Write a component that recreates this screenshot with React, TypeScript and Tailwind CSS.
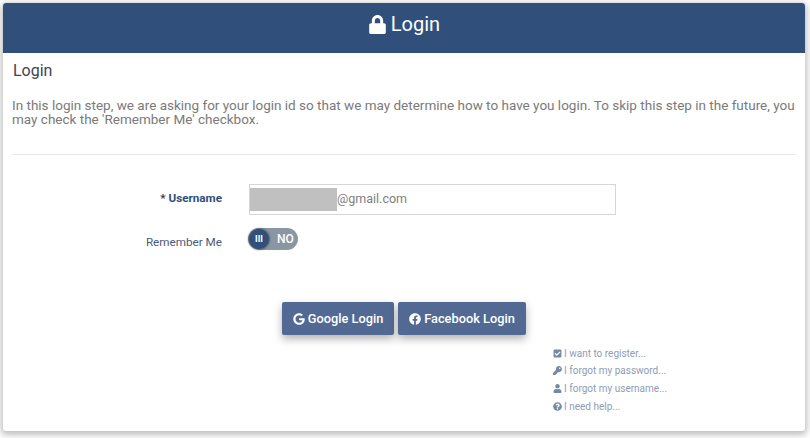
import React from "react";
import { FaLock, FaGoogle, FaFacebook, FaCheckSquare, FaKey, FaUser, FaQuestionCircle } from "react-icons/fa";

const links = [
  { icon: <FaCheckSquare />, text: "I want to register..." },
  { icon: <FaKey />, text: "I forgot my password..." },
  { icon: <FaUser />, text: "I forgot my username..." },
  { icon: <FaQuestionCircle />, text: "I need help..." },
];

const App = () => {
  return (
    <div className="w-[810px] h-[438px] bg-white pt-[3px] pl-[3px] font-['Roboto',sans-serif] overflow-hidden">
      <div className="w-[802px] h-[428px] bg-white rounded-[3px] shadow-[0_2px_6px_2px_rgba(0,0,0,0.25)]">
        <div className="h-[50px] bg-[#314f7b] rounded-t-[3px] flex items-center justify-center gap-[4px] text-white text-[20px] pb-[8px]">
          <FaLock className="text-[19px]" />
          <span>Login</span>
        </div>

        <div className="px-[10px]">
          <h2 className="text-[16px] leading-[20px] text-[#3d4452] mt-[8px]">Login</h2>
          <p className="text-[13.5px] leading-[14px] text-[#7a7a7a] mt-[17px] -ml-px -mr-[6px]">
            In this login step, we are asking for your login id so that we may determine how to have you login. To skip this step in the future, you may check the 'Remember Me' checkbox.
          </p>
          <div className="h-px bg-[#e6e6e6] mt-[28px]" />

          <div className="flex items-center mt-[29px]">
            <label className="w-[209px] text-right text-[11.7px] font-bold text-[#314f7b] pb-[2px]">
              <span className="text-[#333b48]">* </span>Username
            </label>
            <div className="ml-[27px] w-[367px] h-[31px] border border-[#d6d6d6] flex items-center pl-0 text-[12.5px] text-[#808080]">
              <span className="w-[87px] h-[23px] bg-[#c0c0c0]" />
              <span>@gmail.com</span>
            </div>
          </div>

          <div className="flex items-center mt-[13px]">
            <label className="w-[209px] text-right text-[11.7px] leading-[14px] text-[#4a5a75] pt-[6px]">Remember Me</label>
            <div className="ml-[26px] w-[50px] h-[22px] rounded-full bg-[#8a97a3] flex items-center relative">
              <span className="w-[20px] h-[20px] ml-px pt-[2px] rounded-full bg-[#314f7b] shadow-[0_0_2px_1px_rgba(0,0,0,0.35)] text-white text-[9px] font-bold flex items-center justify-center">
                III
              </span>
              <span className="ml-[8px] text-white text-[12px] font-medium">NO</span>
            </div>
          </div>

          <div className="flex ml-[269px] mt-[52px] gap-[4px]">
            <button className="w-[112px] h-[33px] bg-[#526a93] rounded-[2px] text-white text-[12.8px] font-medium flex items-center justify-center gap-[3px] shadow-[0_4px_8px_rgba(0,0,0,0.3)]">
              <FaGoogle className="text-[12px]" />
              Google Login
            </button>
            <button className="w-[128px] h-[33px] bg-[#526a93] rounded-[2px] text-white text-[12.8px] font-medium flex items-center justify-center gap-[3px] shadow-[0_4px_8px_rgba(0,0,0,0.3)]">
              <FaFacebook className="text-[12px]" />
              Facebook Login
            </button>
          </div>

          <ul className="ml-[540px] mt-[11px] flex flex-col gap-[3.8px]">
            {links.map((l) => (
              <li key={l.text} className="flex items-center gap-[2px] h-[14px] text-[10px] text-[#8f9cb3]">
                <span className="w-[9px] text-[9px] text-[#7488a8]">{l.icon}</span>
                {l.text}
              </li>
            ))}
          </ul>
        </div>
      </div>
    </div>
  );
};

export default App;
